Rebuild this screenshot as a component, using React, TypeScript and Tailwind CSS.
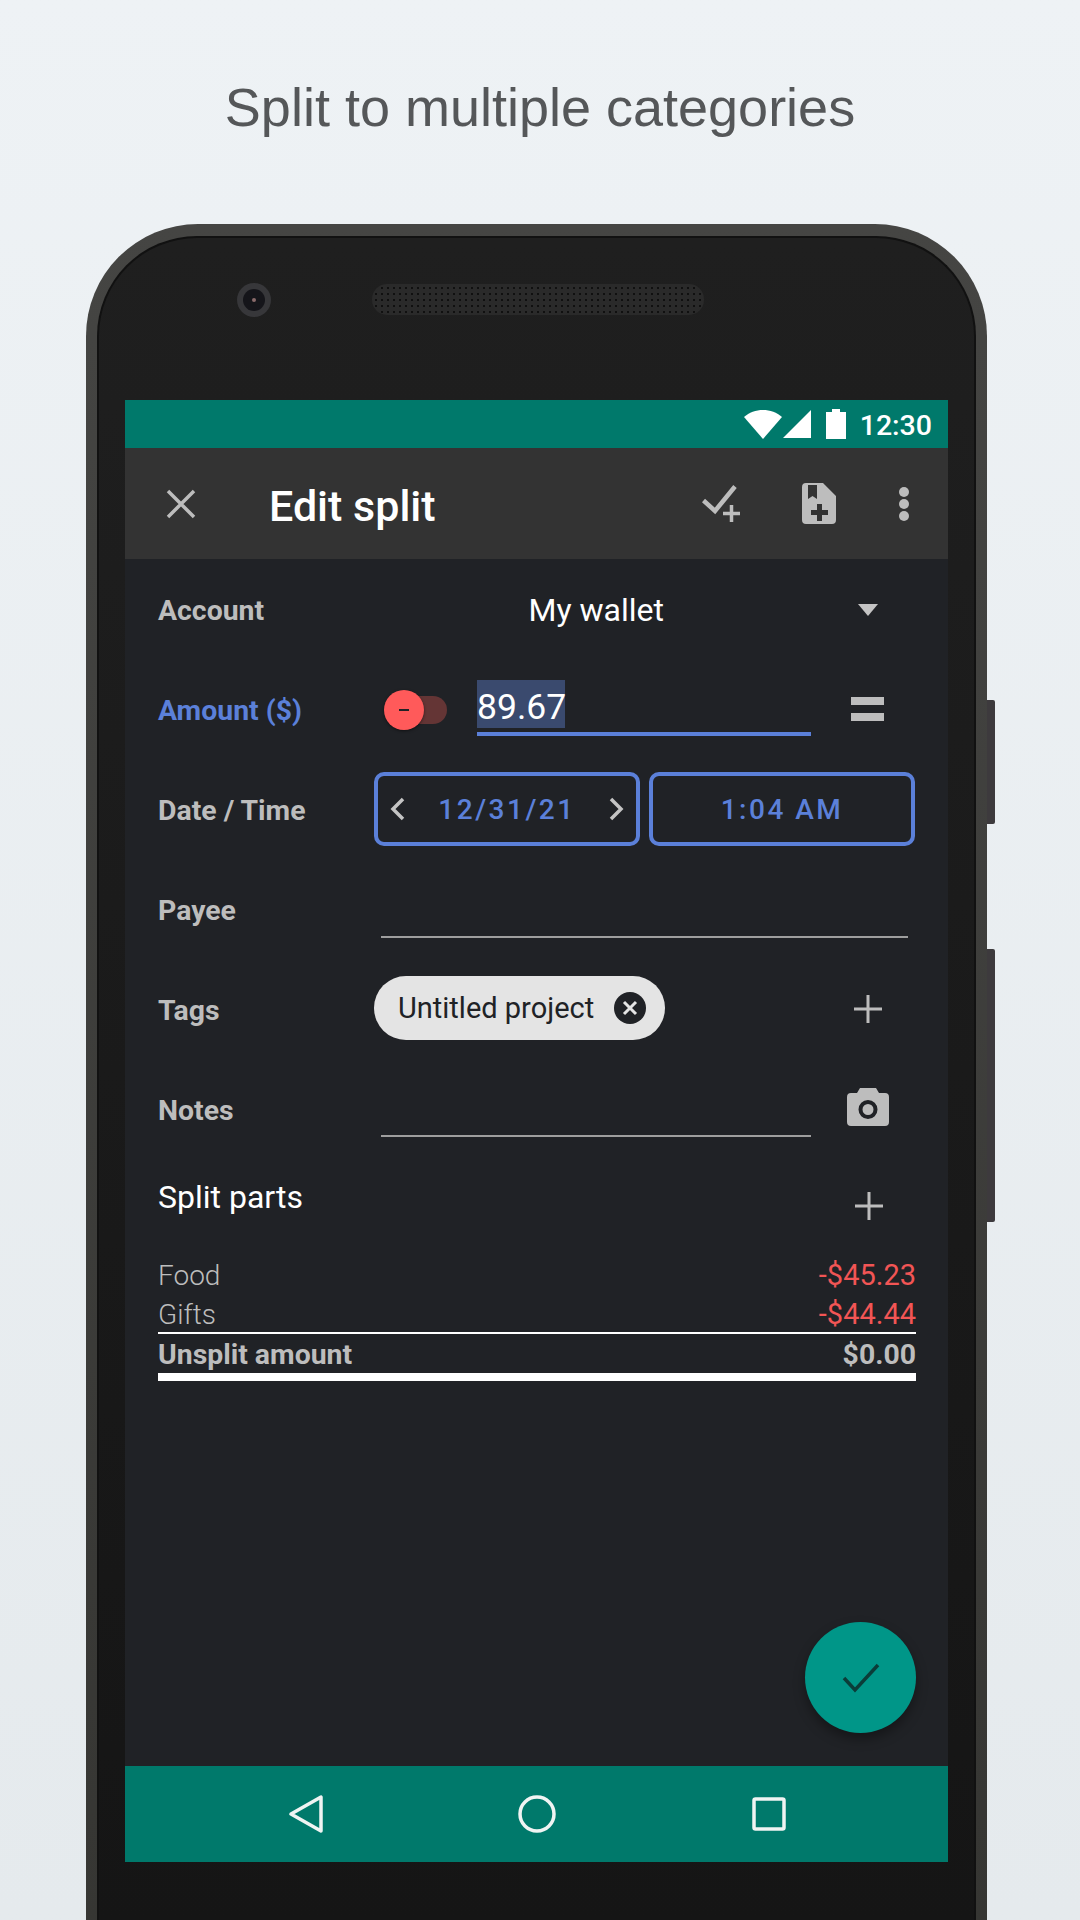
const labelCls = "w-[216px] shrink-0 pt-[5px] text-[28.4px] font-bold text-[#bdbdbd]";

function Plus({ className = "" }: { className?: string }) {
  return (
    <svg width="30" height="30" viewBox="0 0 30 30" className={className}>
      <path d="M15 1v28M1 15h28" stroke="#bdbdbd" strokeWidth="3" fill="none" />
    </svg>
  );
}

function Row({ children }: { children: React.ReactNode }) {
  return <div className="flex h-[100px] items-center pl-[33px]">{children}</div>;
}

function Chevron({ dir }: { dir: "l" | "r" }) {
  return (
    <svg width="16" height="24" viewBox="0 0 16 24">
      <path d={dir === "l" ? "M14 2 4 12l10 10" : "M2 2l10 10L2 22"} stroke="#c4c4c4" strokeWidth="3.5" fill="none" />
    </svg>
  );
}

export default function App() {
  return (
    <div className="h-[1920px] w-[1080px] overflow-hidden bg-gradient-to-b from-[#eef2f5] to-[#e5eaed] font-['Roboto',sans-serif]">
      <div className="h-[224px] pt-[73px] text-center font-['Liberation_Sans',sans-serif] text-[54px] leading-[68px] text-[#555759]">
        Split to multiple categories
      </div>

      <div className="relative ml-[86px] h-[1696px] w-[901px] rounded-t-[112px] bg-gradient-to-b from-[#454543] to-[#363633] px-[11px] pt-[12px]">
        <div className="absolute left-[901px] top-[476px] h-[124px] w-[8px] rounded-r-[2px] bg-[#3d3a3d]" />
        <div className="absolute left-[901px] top-[725px] h-[273px] w-[8px] rounded-r-[2px] bg-[#3d3a3d]" />

        <div className="relative h-full rounded-t-[100px] border-x-[2px] border-t-[2px] border-[#111111] bg-gradient-to-b from-[#1f1f1f] to-[#151515] pl-[26px] pt-[162px]">
          <div className="absolute left-[138px] top-[45px] flex h-[34px] w-[34px] items-center justify-center rounded-full bg-[#37373a]">
            <div className="flex h-[22px] w-[22px] items-center justify-center rounded-full bg-[#15151a]">
              <div className="h-[4px] w-[4px] rounded-full bg-[#8a6a6a]" />
            </div>
          </div>
          <div className="absolute left-[274px] top-[47px] h-[29px] w-[330px] rounded-[14px] bg-[#2a2a2a] bg-[radial-gradient(#101010_1.3px,transparent_1.5px)] bg-[length:6px_6px] shadow-[0_0_0_1px_#2a2a2a]" />

          {/* Screen */}
          <div className="flex h-[1462px] w-[823px] flex-col bg-[#202226]">
            <div className="flex h-[48px] items-center justify-end bg-[#00796b] pr-[16px]">
              <svg width="38" height="29" viewBox="0 0 38 29" className="mr-[1px]">
                <path d="M0 7C5 2.500 12 0 19 0s14 2.500 19 7L19 29Z" fill="#fff" />
              </svg>
              <svg width="28" height="28" viewBox="0 0 28 28" className="mr-[15px]">
                <path d="M28 0v28H0Z" fill="#fff" />
              </svg>
              <svg width="20" height="30" viewBox="0 0 20 30" className="mr-[14px]">
                <path d="M6 0h8v3h6v27H0V3h6Z" fill="#fff" />
              </svg>
              <span className="pt-[4px] text-[28.500px] font-medium leading-[34px] text-white">12:30</span>
            </div>

            <div className="flex h-[111px] items-center bg-[#333333]">
              <svg width="30" height="30" viewBox="0 0 30 30" className="ml-[41px]">
                <path d="M2 2l26 26M28 2 2 28" stroke="#bdbdbd" strokeWidth="3.5" fill="none" />
              </svg>
              <div className="ml-[73px] pt-[4px] text-[43px] font-medium leading-[48px] text-white">Edit split</div>
              <div className="flex-1" />
              <svg width="40" height="37" viewBox="0 0 40 37" className="mr-[1px]">
                <path d="M1.500 15.500 13 26 33 1.500" stroke="#bdbdbd" strokeWidth="4.500" fill="none" />
                <path d="M29.500 20v17M21 28.500h17" stroke="#bdbdbd" strokeWidth="3.500" fill="none" />
              </svg>
              <svg width="34" height="41" viewBox="0 0 34 41" className="ml-[59px]">
                <path fillRule="evenodd" fill="#bdbdbd" d="M4 0h17l13 13v24a4 4 0 0 1-4 4H4a4 4 0 0 1-4-4V4a4 4 0 0 1 4-4ZM6 2v14l4.500-3 4.500 3V2ZM15 21v6H9v5h6v6h5v-6h6v-5h-6v-6Z" />
              </svg>
              <svg width="12" height="36" viewBox="0 0 12 36" className="ml-[62px] mr-[38px]">
                <circle cx="6" cy="6" r="5" fill="#bdbdbd" />
                <circle cx="6" cy="18" r="5" fill="#bdbdbd" />
                <circle cx="6" cy="30" r="5" fill="#bdbdbd" />
              </svg>
            </div>

            <div className="relative flex-1">
              <Row>
                <div className={labelCls}>Account</div>
                <div className="w-[290px] pt-[2px] text-right text-[32px] leading-[40px] text-white">My wallet</div>
                <svg width="20" height="12" viewBox="0 0 20 12" className="ml-[194px] mt-[2px]">
                  <path d="M0 0h20L10 12Z" fill="#c4c4c4" />
                </svg>
              </Row>

              <Row>
                <div className={`${labelCls} !text-[#5b80d9]`}>Amount ($)</div>
                <div className="relative ml-[10px] mt-[2px] h-[40px] w-[63px]">
                  <div className="absolute left-[20px] top-[6px] h-[28px] w-[43px] rounded-full bg-[#643535]" />
                  <div className="absolute left-0 top-0 flex h-[40px] w-[40px] items-center justify-center rounded-full bg-[#ff5a5a] shadow-[0_1px_3px_rgba(0,0,0,0.5)]">
                    <div className="h-[2.500px] w-[10px] bg-[#202226]" />
                  </div>
                </div>
                <div className="ml-[30px] mt-[4px] flex h-[62px] w-[334px] flex-col">
                  <div className="flex h-[48px] w-[88px] items-center bg-[#3a4a6e] pt-[6px] text-[35.500px] leading-[42px] text-white">89.67</div>
                  <div className="mt-[4px] h-[4px] w-full bg-[#5b80d9]" />
                </div>
                <div className="ml-[40px] flex w-[33px] flex-col gap-[8px]">
                  <div className="h-[8px] bg-[#bdbdbd]" />
                  <div className="h-[8px] bg-[#bdbdbd]" />
                </div>
              </Row>

              <Row>
                <div className={labelCls}>Date / Time</div>
                <div className="-mt-[1px] flex h-[74px] w-[266px] items-center justify-between rounded-[10px] border-[4px] border-[#5b80d9] px-[11px]">
                  <Chevron dir="l" />
                  <span className="pt-[3px] text-[28px] font-medium tracking-[2.500px] text-[#5b80d9]">12/31/21</span>
                  <Chevron dir="r" />
                </div>
                <div className="-mt-[1px] ml-[9px] flex h-[74px] w-[266px] items-center justify-center rounded-[10px] border-[4px] border-[#5b80d9]">
                  <span className="pt-[3px] text-[28px] font-medium tracking-[2.500px] text-[#5b80d9]">1:04 AM</span>
                </div>
              </Row>

              <Row>
                <div className={labelCls}>Payee</div>
                <div className="ml-[7px] mt-[56px] h-[2px] w-[527px] bg-[#9e9e9e]" />
              </Row>

              <Row>
                <div className={labelCls}>Tags</div>
                <div className="-mt-[2px] flex h-[64px] w-[291px] items-center rounded-full bg-[#e4e4e4] pl-[24px]">
                  <span className="text-[29px] leading-[34px] text-[#202226]">Untitled project</span>
                  <svg width="32" height="32" viewBox="0 0 32 32" className="ml-[20px]">
                    <circle cx="16" cy="16" r="16" fill="#202226" />
                    <path d="M10 10l12 12M22 10 10 22" stroke="#e4e4e4" strokeWidth="3" />
                  </svg>
                </div>
                <Plus className="ml-[188px]" />
              </Row>

              <Row>
                <div className={labelCls}>Notes</div>
                <div className="ml-[7px] mt-[54px] h-[2px] w-[430px] bg-[#9e9e9e]" />
                <svg width="42" height="38" viewBox="0 0 42 38" className="-mt-[4px] ml-[36px]">
                  <path fillRule="evenodd" fill="#bdbdbd" d="M13 0h16l3 5h6a4 4 0 0 1 4 4v25a4 4 0 0 1-4 4H4a4 4 0 0 1-4-4V9a4 4 0 0 1 4-4h6ZM21 12a9.500 9.500 0 1 0 0 19 9.500 9.500 0 0 0 0-19Zm0 4a5.500 5.500 0 1 1 0 11 5.500 5.500 0 0 1 0-11Z" />
                </svg>
              </Row>

              <div className="ml-[33px] mr-[32px]">
                <div className="flex h-[97px] items-start justify-between">
                  <span className="mt-[19px] text-[32px] leading-[38px] text-white">Split parts</span>
                  <Plus className="mr-[32px] mt-[32px]" />
                </div>
                <div className="flex h-[38px] items-center justify-between pt-[2px] text-[28px] font-light">
                  <span className="text-[#bdbdbd]">Food</span>
                  <span className="text-[29px] font-normal text-[#f25555]">-$45.23</span>
                </div>
                <div className="flex h-[38px] items-center justify-between pt-[3px] text-[28px] font-light">
                  <span className="text-[#bdbdbd]">Gifts</span>
                  <span className="text-[29px] font-normal text-[#f25555]">-$44.44</span>
                </div>
                <div className="h-[2px] bg-white" />
                <div className="flex h-[39px] items-center justify-between pt-[3px] text-[28.400px] font-bold text-[#bdbdbd]">
                  <span>Unsplit amount</span>
                  <span>$0.00</span>
                </div>
                <div className="h-[8px] bg-white" />
              </div>

              <div className="absolute bottom-[33px] right-[32px] flex h-[111px] w-[111px] items-center justify-center rounded-full bg-[#009688] shadow-[0_6px_12px_rgba(0,0,0,0.35)]">
                <svg width="38" height="30" viewBox="0 0 38 30">
                  <path d="M2 15l11 12L36 2" stroke="#0b3d39" strokeWidth="3.500" fill="none" />
                </svg>
              </div>
            </div>

            <div className="flex h-[96px] items-center bg-[#00796b] pl-[164px]">
              <svg width="34" height="38" viewBox="0 0 34 38">
                <path d="M32 2v34L2 19Z" stroke="#f0f4f3" strokeWidth="3.500" strokeLinejoin="round" fill="none" />
              </svg>
              <svg width="38" height="38" viewBox="0 0 38 38" className="ml-[195px]">
                <circle cx="19" cy="19" r="17" stroke="#f0f4f3" strokeWidth="3.500" fill="none" />
              </svg>
              <svg width="34" height="34" viewBox="0 0 34 34" className="ml-[196px]">
                <rect x="2" y="2" width="30" height="30" rx="1.500" stroke="#f0f4f3" strokeWidth="3.500" fill="none" />
              </svg>
            </div>
          </div>
        </div>
      </div>
    </div>
  );
}
